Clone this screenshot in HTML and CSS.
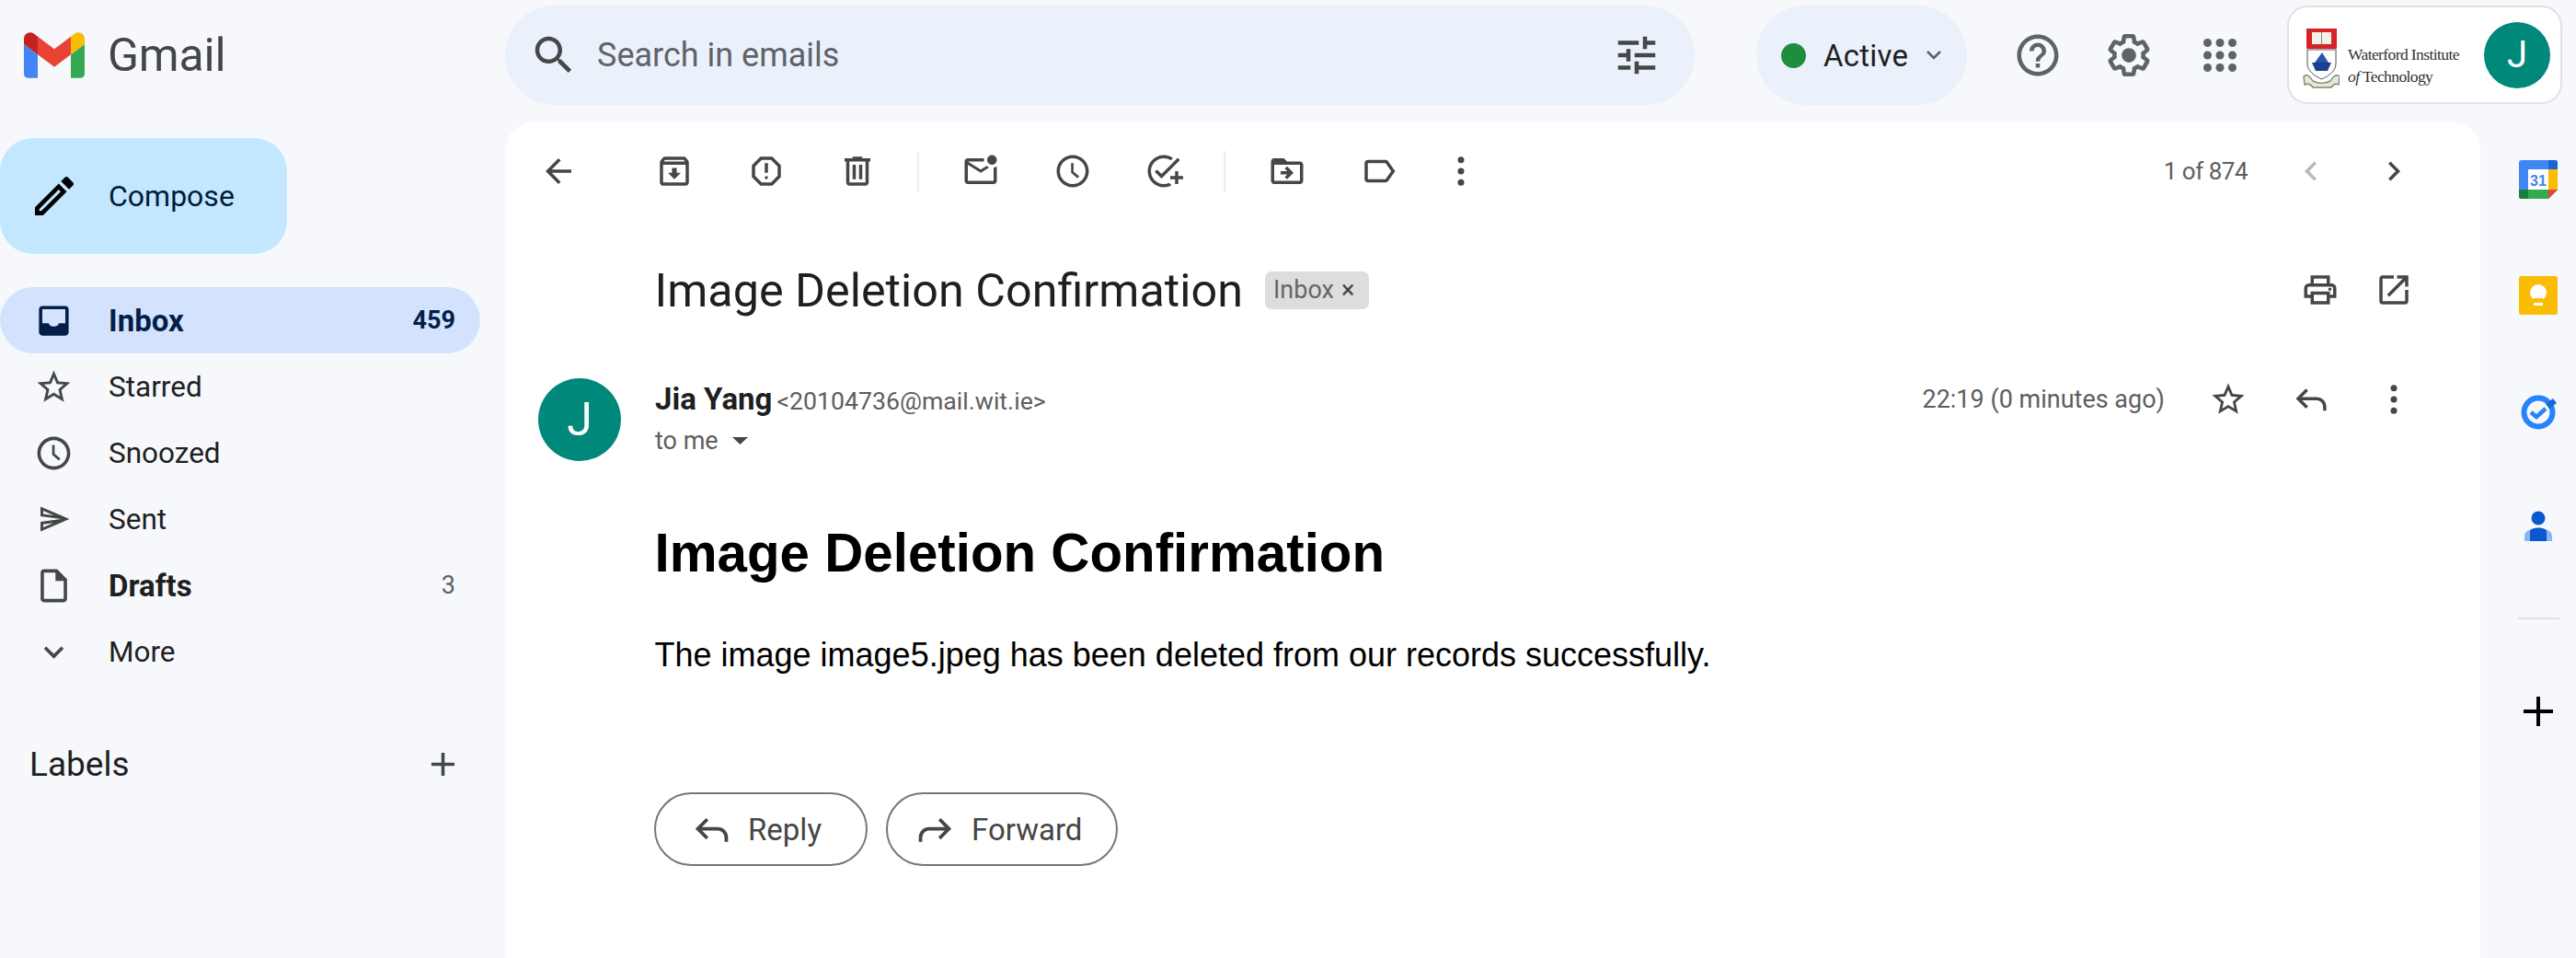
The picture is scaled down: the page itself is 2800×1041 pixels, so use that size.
FILE: index.html
```html
<!DOCTYPE html>
<html lang="en">
<head>
<meta charset="utf-8">
<title>Image Deletion Confirmation - Gmail</title>
<link rel="stylesheet" href="styles.css">
</head>
<body>
<div class="app">
  <header class="topbar">
    <div class="brand">
      <svg class="gmail-mark" viewBox="52 42 88 66"><path fill="#4285f4" d="M58 108h14V74L52 59v43c0 3.32 2.69 6 6 6"/><path fill="#34a853" d="M120 108h14c3.32 0 6-2.69 6-6V59l-20 15"/><path fill="#fbbc04" d="M120 48v26l20-15v-8c0-7.42-8.47-11.65-14.4-7.2"/><path fill="#ea4335" d="M72 74V48l24 18 24-18v26L96 92"/><path fill="#c5221f" d="M52 51v8l20 15V48l-5.6-4.2c-5.94-4.45-14.4-.22-14.4 7.2"/></svg>
      <span class="gmail-word">Gmail</span>
    </div>
    <div class="search">
      <svg class="ic54 ic-dark" viewBox="0 0 24 24"><path d="M15.5 14h-.79l-.28-.27C15.41 12.59 16 11.11 16 9.5 16 5.91 13.09 3 9.5 3S3 5.91 3 9.5 5.91 16 9.5 16c1.61 0 3.09-.59 4.23-1.57l.27.28v.79l5 4.99L20.49 19l-4.99-5zm-6 0C7.01 14 5 11.99 5 9.5S7.01 5 9.5 5 14 7.01 14 9.5 11.99 14 9.5 14z"/></svg>
      <span class="search-text">Search in emails</span>
      <svg class="ic54 ic-dark search-tune" viewBox="0 0 24 24"><path d="M3 17v2h6v-2H3zM3 5v2h10V5H3zm10 16v-2h8v-2h-8v-2h-2v6h2zM7 9v2H3v2h4v2h2V9H7zm14 4v-2H11v2h10zm-6-4h2V7h4V5h-4V3h-2v6z"/></svg>
    </div>
    <div class="status">
      <span class="status-dot"></span>
      <span class="status-text">Active</span>
      <svg class="status-chev" viewBox="0 0 18 12"><path d="M2 2l7 7 7-7" fill="none" stroke="#5f6368" stroke-width="2.6"/></svg>
    </div>
    <div class="top-icons">
      <span class="top-btn"><svg class="ic54 ic-grey" viewBox="0 0 24 24"><path d="M11 18h2v-2h-2v2zm1-16C6.48 2 2 6.48 2 12s4.48 10 10 10 10-4.48 10-10S17.52 2 12 2zm0 18c-4.41 0-8-3.59-8-8s3.59-8 8-8 8 3.59 8 8-3.59 8-8 8zm0-14c-2.21 0-4 1.79-4 4h2c0-1.1.9-2 2-2s2 .9 2 2c0 2-3 1.75-3 5h2c0-2.25 3-2.5 3-5 0-2.21-1.79-4-4-4z"/></svg></span>
      <span class="top-btn"><svg class="ic54 ic-grey" viewBox="0 0 24 24"><path d="M13.85 22.25h-3.7c-.74 0-1.36-.54-1.45-1.27l-.27-1.89c-.27-.14-.53-.29-.79-.46l-1.8.72c-.7.26-1.47-.03-1.81-.65L2.2 15.53c-.35-.66-.2-1.44.36-1.88l1.53-1.19c-.01-.15-.02-.3-.02-.46 0-.15.01-.31.02-.46l-1.52-1.19c-.59-.45-.74-1.26-.37-1.88l1.85-3.19c.34-.62 1.11-.9 1.79-.63l1.81.73c.26-.17.52-.32.78-.46l.27-1.91c.09-.7.71-1.25 1.44-1.25h3.7c.74 0 1.36.54 1.45 1.27l.27 1.89c.27.14.53.29.79.46l1.8-.72c.71-.26 1.48.03 1.82.65l1.84 3.18c.36.66.2 1.44-.36 1.88l-1.52 1.19c.01.15.02.3.02.46s-.01.31-.02.46l1.52 1.19c.56.45.72 1.23.37 1.86l-1.86 3.22c-.34.62-1.11.9-1.8.63l-1.8-.72c-.26.17-.52.32-.78.46l-.27 1.91c-.1.68-.72 1.22-1.46 1.22zm-3.23-2h2.76l.37-2.55.53-.22c.44-.18.88-.44 1.34-.78l.45-.34 2.38.96 1.38-2.4-2.03-1.58.07-.56c.03-.26.06-.51.06-.78s-.03-.53-.06-.78l-.07-.56 2.03-1.58-1.39-2.4-2.39.96-.45-.35c-.42-.32-.87-.58-1.33-.77l-.52-.22-.37-2.55h-2.76l-.37 2.55-.53.21c-.44.19-.88.44-1.34.79l-.45.33-2.38-.95-1.39 2.39 2.03 1.58-.07.56c-.03.26-.06.53-.06.79s.02.53.06.78l.07.56-2.03 1.58 1.38 2.4 2.39-.96.45.35c.43.33.86.58 1.33.77l.53.22.38 2.55z"/><circle cx="12" cy="12" r="3.5"/></svg></span>
      <span class="top-btn"><svg class="ic54 ic-grey" viewBox="0 0 24 24"><circle cx="6" cy="6" r="2"/><circle cx="12" cy="6" r="2"/><circle cx="18" cy="6" r="2"/><circle cx="6" cy="12" r="2"/><circle cx="12" cy="12" r="2"/><circle cx="18" cy="12" r="2"/><circle cx="6" cy="18" r="2"/><circle cx="12" cy="18" r="2"/><circle cx="18" cy="18" r="2"/></svg></span>
    </div>
    <div class="account">
      <svg class="crest" viewBox="0 0 40 66">
        <rect x="4" y="0" width="33" height="22" fill="#d8222a"/>
        <path d="M10 4h10v13H10zM21 4h10v13H21z" fill="#f4f1e6"/>
        <path d="M20.500 4v13" stroke="#888" stroke-width="1"/>
        <path d="M5 23h31v15c0 8-7 13-15.500 17C12 51 5 46 5 38z" fill="#fff" stroke="#555" stroke-width="1"/>
        <path d="M10 37h21l-4 9h-13z" fill="#1e3f8f"/>
        <path d="M21 26l7 11H13z" fill="#2c55a8"/>
        <path d="M1 52c4-3 7 0 10 5 6 3 13 3 19 0 3-5 6-8 10-5l-1 9c-4-2-6 0-8 3H11c-2-3-5-5-9-3z" fill="#e6e8d8" stroke="#7c8a70" stroke-width="1.400"/>
      </svg>
      <div class="account-name">
        <span>Waterford Institute</span>
        <span><i>of</i> Technology</span>
      </div>
      <span class="avatar avatar-small">J</span>
    </div>
  </header>

  <nav class="sidebar">
    <div class="compose">
      <svg class="compose-pen" viewBox="0 0 24 24"><path d="M14.060 9.020l.92.92L5.920 19H5v-.92l9.060-9.060M17.660 3c-.25 0-.51.1-.7.29l-1.830 1.830 3.750 3.750 1.830-1.830c.39-.39.39-1.020 0-1.410l-2.340-2.340c-.2-.2-.45-.29-.71-.29zm-3.600 3.190L3 17.250V21h3.750L17.810 9.940l-3.750-3.750z"/></svg>
      <span>Compose</span>
    </div>
    <ul class="nav">
      <li class="nav-row nav-active">
        <svg class="nav-ic" viewBox="0 0 24 24"><path d="M19 3H5c-1.100 0-2 .9-2 2v14c0 1.100.9 2 2 2h14c1.100 0 2-.9 2-2V5c0-1.100-.9-2-2-2zm0 10.500h-4c0 1.100-1.350 2-3 2s-3-.9-3-2H5V5h14v8.500z"/></svg>
        <span class="nav-label">Inbox</span><span class="nav-count">459</span>
      </li>
      <li class="nav-row">
        <svg class="nav-ic" viewBox="0 0 24 24"><path d="M22 9.240l-7.190-.62L12 2 9.190 8.630 2 9.240l5.460 4.730L5.820 21 12 17.270 18.180 21l-1.630-7.030L22 9.240zM12 15.400l-3.760 2.270 1-4.280-3.320-2.880 4.380-.38L12 6.100l1.710 4.040 4.380.38-3.320 2.880 1 4.280L12 15.400z"/></svg>
        <span class="nav-label">Starred</span>
      </li>
      <li class="nav-row">
        <svg class="nav-ic" viewBox="0 0 24 24"><path d="M11.990 2C6.470 2 2 6.480 2 12s4.470 10 9.990 10C17.520 22 22 17.520 22 12S17.520 2 11.990 2zM12 20c-4.420 0-8-3.580-8-8s3.580-8 8-8 8 3.580 8 8-3.580 8-8 8zm.5-13H11v6l4 3.400 1-1.200-3.500-2.900z"/></svg>
        <span class="nav-label">Snoozed</span>
      </li>
      <li class="nav-row">
        <svg class="nav-ic nav-ic-send" viewBox="0 0 24 24"><path d="M4.010 6.030l7.510 3.220-7.520-1 .01-2.220m7.500 8.720L4 17.970v-2.220l7.510-1M2.010 3L2 10l15 2-15 2 .01 7L23 12 2.010 3z"/></svg>
        <span class="nav-label">Sent</span>
      </li>
      <li class="nav-row nav-bold">
        <svg class="nav-ic" viewBox="0 0 24 24"><path d="M14 2H6c-1.100 0-1.990.9-1.990 2L4 20c0 1.100.89 2 1.990 2H18c1.100 0 2-.9 2-2V8l-6-6zM6 20V4h7v5h5v11H6z"/></svg>
        <span class="nav-label">Drafts</span><span class="nav-count nav-count-light">3</span>
      </li>
      <li class="nav-row">
        <svg class="nav-ic" viewBox="0 0 24 24"><path d="M16.590 8.590L12 13.170 7.410 8.590 6 10l6 6 6-6z"/></svg>
        <span class="nav-label">More</span>
      </li>
    </ul>
    <div class="labels">
      <span>Labels</span>
      <svg class="nav-ic" viewBox="0 0 24 24"><path d="M19 13h-6v6h-2v-6H5v-2h6V5h2v6h6v2z"/></svg>
    </div>
  </nav>

  <main class="mail">
    <div class="toolbar">
      <span class="tool tool-back"><svg viewBox="0 0 24 24"><path d="M20 11H7.830l5.590-5.590L12 4l-8 8 8 8 1.410-1.410L7.830 13H20v-2z"/></svg></span>
      <div class="tool-group tool-group-first">
        <span class="tool"><svg viewBox="0 0 24 24"><path d="M20.540 5.230l-1.390-1.680C18.880 3.210 18.470 3 18 3H6c-.47 0-.88.21-1.160.55L3.460 5.230C3.170 5.570 3 6.020 3 6.500V19c0 1.100.9 2 2 2h14c1.100 0 2-.9 2-2V6.500c0-.48-.17-.93-.46-1.270zM6.240 5h11.520l.83 1H5.420l.82-1zM5 19V8h14v11H5zm8.450-9h-2.900v3H8l4 4 4-4h-2.550z"/></svg></span>
        <span class="tool"><svg viewBox="0 0 24 24"><path d="M15.730 3H8.270L3 8.270v7.460L8.270 21h7.460L21 15.730V8.270L15.730 3zM19 14.900L14.900 19H9.100L5 14.900V9.100L9.100 5h5.800L19 9.100v5.800z"/><path d="M11 7h2v6h-2z"/><circle cx="12" cy="16" r="1"/></svg></span>
        <span class="tool"><svg viewBox="0 0 24 24"><path d="M15 4V3H9v1H4v2h1v13c0 1.100.9 2 2 2h10c1.100 0 2-.9 2-2V6h1V4h-5zm2 15H7V6h10v13zM9 8h2v9H9zm4 0h2v9h-2z"/></svg></span>
      </div>
      <span class="tool-sep"></span>
      <div class="tool-group">
        <span class="tool"><svg viewBox="0 0 24 24"><path d="M22 8.980V18c0 1.100-.9 2-2 2H4c-1.100 0-2-.9-2-2V6c0-1.100.9-2 2-2h10.100c-.06.32-.1.66-.1 1 0 .34.04.68.1 1H4l8 5 3.670-2.290c.47.43 1.020.76 1.630.98L12 13 4 8v10h16V9.900c.74-.15 1.420-.48 2-.92zM16 5c0 1.660 1.340 3 3 3s3-1.340 3-3-1.340-3-3-3-3 1.340-3 3z"/></svg></span>
        <span class="tool"><svg viewBox="0 0 24 24"><path d="M11.990 2C6.470 2 2 6.480 2 12s4.470 10 9.990 10C17.520 22 22 17.520 22 12S17.520 2 11.990 2zM12 20c-4.420 0-8-3.580-8-8s3.580-8 8-8 8 3.580 8 8-3.580 8-8 8zm.5-13H11v6l4 3.400 1-1.200-3.500-2.900z"/></svg></span>
        <span class="tool"><svg viewBox="0 0 24 24"><path d="M22 5.180L10.590 16.600l-4.240-4.240 1.410-1.410 2.830 2.830 10-10L22 5.180zM12 20c-4.410 0-8-3.590-8-8s3.590-8 8-8c1.570 0 3.040.46 4.280 1.250l1.450-1.450C16.100 2.670 14.130 2 12 2 6.480 2 2 6.480 2 12s4.480 10 10 10c1.730 0 3.360-.44 4.780-1.220l-1.500-1.500c-1 .46-2.110.72-3.280.72zm7-5h-3v2h3v3h2v-3h3v-2h-3v-3h-2v3z"/></svg></span>
      </div>
      <span class="tool-sep"></span>
      <div class="tool-group">
        <span class="tool"><svg viewBox="0 0 24 24"><path d="M20 6h-8l-2-2H4c-1.100 0-1.990.9-1.990 2L2 18c0 1.100.9 2 2 2h16c1.100 0 2-.9 2-2V8c0-1.100-.9-2-2-2zm0 12H4V8h16v10z"/><path d="M12.160 12H8v2h4.160l-1.590 1.590L11.990 17 16 13l-4.010-4-1.420 1.410z"/></svg></span>
        <span class="tool"><svg viewBox="0 0 24 24"><path d="M17.630 5.840C17.270 5.330 16.670 5 16 5L5 5.010C3.900 5.010 3 5.900 3 7v10c0 1.100.9 1.990 2 1.990L16 19c.67 0 1.270-.33 1.630-.84L22 12l-4.370-6.160zM16 17H5V7h11l3.550 5L16 17z"/></svg></span>
        <span class="tool tool-tight"><svg viewBox="0 0 24 24"><circle cx="12" cy="5" r="2"/><circle cx="12" cy="12" r="2"/><circle cx="12" cy="19" r="2"/></svg></span>
      </div>
      <div class="pager">
        <span class="pager-text">1 of 874</span>
        <span class="tool tool-off"><svg viewBox="0 0 24 24"><path d="M15.410 7.410L14 6l-6 6 6 6 1.410-1.410L10.830 12z"/></svg></span>
        <span class="tool"><svg viewBox="0 0 24 24"><path d="M8.590 16.590L10 18l6-6-6-6-1.410 1.410L13.170 12z"/></svg></span>
      </div>
    </div>

    <div class="subject-row">
      <h2 class="subject">Image Deletion Confirmation</h2>
      <span class="tag">Inbox <b class="tag-x">×</b></span>
      <div class="subject-actions">
        <span class="tool tool-80"><svg viewBox="0 0 24 24"><path d="M19 8h-1V3H6v5H5c-1.660 0-3 1.340-3 3v6h4v4h12v-4h4v-6c0-1.660-1.340-3-3-3zM8 5h8v3H8V5zm8 12v2H8v-4h8v2zm2-2v-2H6v2H4v-4c0-.55.45-1 1-1h14c.55 0 1 .45 1 1v4h-2z"/><circle cx="18" cy="11.500" r="1"/></svg></span>
        <span class="tool tool-80"><svg viewBox="0 0 24 24"><path d="M19 19H5V5h7V3H5c-1.110 0-2 .9-2 2v14c0 1.100.89 2 2 2h14c1.100 0 2-.9 2-2v-7h-2v7zM14 3v2h3.590l-9.830 9.830 1.410 1.410L19 6.410V10h2V3h-7z"/></svg></span>
      </div>
    </div>

    <div class="message-head">
      <span class="avatar avatar-large">J</span>
      <div class="sender">
        <div class="sender-line"><strong class="sender-name">Jia Yang</strong> <span class="sender-mail">&lt;20104736@mail.wit.ie&gt;</span></div>
        <div class="sender-to">to me <svg class="to-caret" viewBox="0 0 17 8"><path d="M0 0h17L8.500 8z"/></svg></div>
      </div>
      <div class="message-meta">
        <span class="message-time">22:19 (0 minutes ago)</span>
        <span class="tool"><svg viewBox="0 0 24 24"><path d="M22 9.240l-7.190-.62L12 2 9.190 8.630 2 9.240l5.460 4.730L5.820 21 12 17.270 18.180 21l-1.630-7.030L22 9.240zM12 15.400l-3.760 2.270 1-4.280-3.320-2.880 4.380-.38L12 6.100l1.710 4.040 4.380.38-3.320 2.880 1 4.280L12 15.400z"/></svg></span>
        <span class="tool"><svg class="stroke-ic" viewBox="0 0 24 24"><path d="M9.500 6L4 11.500 9.500 17M4 11.500h11.500a5 5 0 0 1 5 5V19"/></svg></span>
        <span class="tool"><svg viewBox="0 0 24 24"><circle cx="12" cy="5" r="2"/><circle cx="12" cy="12" r="2"/><circle cx="12" cy="19" r="2"/></svg></span>
      </div>
    </div>

    <article class="message-body">
      <h1>Image Deletion Confirmation</h1>
      <p>The image image5.jpeg has been deleted from our records successfully.</p>
    </article>

    <div class="reply-row">
      <span class="pill pill-reply"><svg class="stroke-ic pill-ic" viewBox="0 0 24 24"><path d="M9.500 6L4 11.500 9.500 17M4 11.500h11.500a5 5 0 0 1 5 5V19"/></svg>Reply</span>
      <span class="pill pill-forward"><svg class="stroke-ic pill-ic" viewBox="0 0 24 24"><path d="M14.500 6L20 11.500 14.500 17M20 11.500H8.500a5 5 0 0 0-5 5V19"/></svg>Forward</span>
    </div>
  </main>

  <aside class="rail">
    <span class="rail-item">
      <svg class="rail-ic" viewBox="0 0 42 42"><path d="M3 0h36a3 3 0 0 1 3 3v29l-10 10H3a3 3 0 0 1-3-3V3a3 3 0 0 1 3-3z" fill="#4285f4"/><rect x="10" y="10" width="22" height="22" fill="#fff"/><path d="M32 10h10v22H32z" fill="#fbbc04"/><path d="M32 0h7a3 3 0 0 1 3 3v7H32z" fill="#1967d2"/><path d="M0 32h32v10H3a3 3 0 0 1-3-3z" fill="#34a853"/><path d="M0 32h10v10H3a3 3 0 0 1-3-3z" fill="#188038"/><path d="M32 32h10L32 42z" fill="#ea4335"/><text x="21" y="27.500" class="cal-num">31</text></svg>
    </span>
    <span class="rail-item">
      <svg class="rail-ic" viewBox="0 0 42 42"><rect width="42" height="42" rx="3" fill="#fbbc04"/><circle cx="21" cy="18" r="9" fill="#fff"/><rect x="16" y="24" width="10" height="3" fill="#fbbc04"/><rect x="16" y="29" width="10" height="3" fill="#fff"/></svg>
    </span>
    <span class="rail-item">
      <svg class="rail-ic" viewBox="0 0 42 42"><circle cx="21" cy="22" r="15.500" fill="none" stroke="#2684fc" stroke-width="6"/><path d="M13 22l6 5 10-9" fill="none" stroke="#2684fc" stroke-width="4.500"/><path d="M29 13l8-6 4 5-8 6z" fill="#1967d2"/></svg>
    </span>
    <span class="rail-item">
      <svg class="rail-ic" viewBox="0 0 42 42"><circle cx="21" cy="11" r="7.500" fill="#0b57d0"/><path d="M6 36v-5c0-6 6-9 15-9s15 3 15 9v5z" fill="#8ab4f8"/><path d="M12 36V26c0-3 4-4.500 9-4.500s9 1.500 9 4.500v10z" fill="#0b57d0"/></svg>
    </span>
    <span class="rail-sep"></span>
    <span class="rail-plus">
      <svg class="rail-ic" viewBox="0 0 42 42"><path d="M19 5h4v14h14v4H23v14h-4V23H5v-4h14z"/></svg>
    </span>
  </aside>
</div>
</body>
</html>
```

FILE: styles.css
```css
* { box-sizing: border-box; }
html, body { margin: 0; height: 100%; }
body {
  background: #f6f8fc;
  font-family: Roboto, "Liberation Sans", sans-serif;
  color: #1f1f1f;
  overflow: hidden;
}
.app {
  display: grid;
  grid-template-columns: 549px 1fr 104px;
  grid-template-rows: 132px 1fr;
  height: 100vh;
}

/* top bar */
.topbar {
  grid-column: 1 / -1;
  display: flex;
  align-items: flex-start;
  padding-top: 6px;
}
.brand {
  width: 549px;
  height: 108px;
  display: flex;
  align-items: center;
  padding-left: 26px;
  flex: none;
}
.gmail-mark { width: 66px; height: 50px; }
.gmail-word {
  margin-left: 25px;
  font-size: 50px;
  letter-spacing: -.2px;
  color: #444746;
}
.search {
  width: 1293px;
  height: 108px;
  flex: none;
  border-radius: 54px;
  background: #eaf1fb;
  display: flex;
  align-items: center;
  padding-left: 26px;
}
.search-text { margin-left: 20px; font-size: 36px; color: #5f6368; }
.search-tune { margin-left: auto; margin-right: 36px; }
.ic54 { width: 54px; height: 54px; flex: none; }
.ic-dark { fill: #444746; }
.ic-grey { fill: #5f6368; }
.status {
  margin-left: 67px;
  width: 229px;
  height: 108px;
  flex: none;
  border-radius: 54px;
  background: #eaf1fb;
  display: flex;
  align-items: center;
  padding-left: 27px;
}
.status-dot { width: 27px; height: 27px; border-radius: 50%; background: #1e8e3e; flex: none; }
.status-text { margin-left: 19px; font-size: 33px; font-weight: 400; letter-spacing: .2px; color: #1f1f1f; }
.status-chev { width: 18px; height: 12px; margin-left: 19px; }
.top-icons { display: flex; margin-left: 27px; height: 108px; }
.top-btn { width: 99px; display: flex; align-items: center; justify-content: center; }
.account {
  margin-left: 24px;
  width: 299px;
  height: 107px;
  flex: none;
  background: #fff;
  border: 2px solid #dfe1e5;
  border-radius: 22px;
  display: flex;
  align-items: center;
  padding-left: 15px;
}
.crest { width: 40px; height: 66px; flex: none; margin-top: 8px; }
.account-name {
  margin-left: 9px;
  display: flex;
  flex-direction: column;
  gap: 6px;
  margin-top: 23px;
  font-family: "Liberation Serif", serif;
  font-size: 17.5px;
  letter-spacing: -.6px;
  line-height: 18px;
  color: #333;
  white-space: nowrap;
}
.avatar {
  border-radius: 50%;
  background: #00897b;
  color: #fff;
  display: flex;
  align-items: center;
  justify-content: center;
  flex: none;
}
.avatar-small { width: 72px; height: 72px; font-size: 40px; margin-left: auto; margin-right: 11px; }
.avatar-large { width: 90px; height: 90px; font-size: 50px; }

/* sidebar */
.sidebar { min-width: 0; }
.compose {
  margin-top: 18px;
  width: 312px;
  height: 126px;
  border-radius: 36px;
  background: #c2e7ff;
  display: flex;
  align-items: center;
  padding-left: 31px;
  gap: 31px;
  font-size: 32px;
  color: #001d35;
}
.compose-pen { width: 56px; height: 56px; fill: #000; flex: none; }
.nav { list-style: none; margin: 36px 0 0; padding: 0; width: 522px; }
.nav-row {
  height: 72px;
  display: flex;
  align-items: center;
  padding: 0 27px 0 37px;
  font-size: 31.5px;
  color: #1f1f1f;
  border-radius: 36px;
}
.nav-ic { width: 43px; height: 43px; fill: #444746; flex: none; }
.nav-ic-send { width: 36px; height: 36px; margin: 0 3.5px; }
.nav-label { margin-left: 38px; }
.nav-count { margin-left: auto; font-size: 27px; }
.nav-count-light { font-weight: 400; color: #5f6368; }
.nav-active { background: #d3e3fd; color: #041e49; }
.nav-active .nav-label { font-weight: 700; font-size: 33px; }
.nav-active .nav-ic { fill: #041e49; }
.nav-active .nav-count { font-weight: 700; }
.nav-bold .nav-label { font-weight: 700; font-size: 33px; }
.labels {
  width: 522px;
  margin-top: 50px;
  height: 72px;
  display: flex;
  align-items: center;
  justify-content: space-between;
  padding: 0 19px 0 32px;
  font-size: 37px;
  color: #1f1f1f;
}

/* mail pane */
.mail {
  background: #fff;
  border-radius: 32px 32px 0 0;
  min-width: 0;
  overflow: hidden;
}
.toolbar {
  height: 108px;
  display: flex;
  align-items: center;
  padding: 0 49px 0 13px;
}
.tool {
  width: 90px;
  height: 90px;
  display: flex;
  align-items: center;
  justify-content: center;
  flex: none;
}
.tool svg { width: 42px; height: 42px; fill: #444746; }
.tool svg.stroke-ic { fill: none; }
.tool-80 { width: 80px; }
.tool-off svg { fill: #b8b8b8; }
.tool-group { display: flex; gap: 9.5px; margin-left: 22px; }
.tool-group-first { margin-left: 36px; }
.tool-tight { margin-left: -10.5px; }
.tool-sep { width: 2px; height: 45px; background: #eceded; margin-left: 20px; flex: none; }
.pager { margin-left: auto; display: flex; align-items: center; }
.pager-text { font-size: 26px; letter-spacing: -.5px; color: #5e5e5e; margin-right: 24px; }

.subject-row {
  height: 150px;
  display: flex;
  align-items: center;
  padding: 0 54px 0 162.5px;
}
.subject { margin: 0; font-size: 50.3px; font-weight: 400; color: #1f1f1f; }
.tag {
  margin-left: 24px;
  width: 113px;
  height: 41px;
  border-radius: 7px;
  background: #dddddd;
  color: #666;
  font-size: 27px;
  display: flex;
  align-items: center;
  gap: 8px;
  padding-left: 9px;
}
.tag-x { font-weight: 400; color: #444; }
.subject-actions { margin-left: auto; display: flex; }

.message-head {
  margin-top: 21px;
  display: flex;
  align-items: flex-start;
  padding: 0 49px 0 36px;
}
.sender { margin-left: 37px; }
.sender-line { height: 45px; line-height: 45px; }
.sender-name { font-size: 33px; font-weight: 700; color: #1f1f1f; }
.sender-mail { font-size: 26.7px; color: #5e5e5e; margin-left: 1px; }
.sender-to {
  height: 45px;
  display: flex;
  align-items: center;
  font-size: 27px;
  color: #5e5e5e;
}
.to-caret { width: 17px; height: 8px; fill: #444746; margin-left: 15px; }
.message-meta { margin-left: auto; display: flex; align-items: center; margin-top: -22px; }
.message-time { font-size: 27px; color: #5e5e5e; margin-right: 24px; }
.stroke-ic { fill: none; stroke: #444746; stroke-width: 2; }

.message-body { margin-top: 66px; padding-left: 162.5px; color: #000; font-family: "Liberation Sans", Arial, sans-serif; }
.message-body h1 { margin: 0; font-size: 58.3px; line-height: 68px; font-weight: 700; }
.message-body p { margin: 56px 0 0; font-size: 36px; line-height: 42px; }

.reply-row { display: flex; gap: 20px; padding-left: 162px; margin-top: 128px; }
.pill {
  height: 80px;
  border: 2px solid #747775;
  border-radius: 40px;
  display: flex;
  align-items: center;
  font-size: 33px;
  font-weight: 400;
  color: #444746;
}
.pill-reply { width: 232px; padding-left: 38px; }
.pill-forward { width: 252px; padding-left: 29px; }
.pill-ic { width: 45px; height: 45px; margin-right: 17px; flex: none; }

/* right rail */
.rail { display: flex; flex-direction: column; align-items: center; padding-left: 22px; }
.rail-item { height: 126px; display: flex; align-items: center; justify-content: center; }
.rail-ic { width: 42px; height: 42px; display: block; }
.cal-num { font-family: "Liberation Sans", sans-serif; font-size: 16px; font-weight: 700; fill: #4285f4; text-anchor: middle; }
.rail-sep { width: 45px; height: 2px; background: #dfe1e5; margin-top: 35px; }
.rail-plus { margin-top: 79px; }
```
